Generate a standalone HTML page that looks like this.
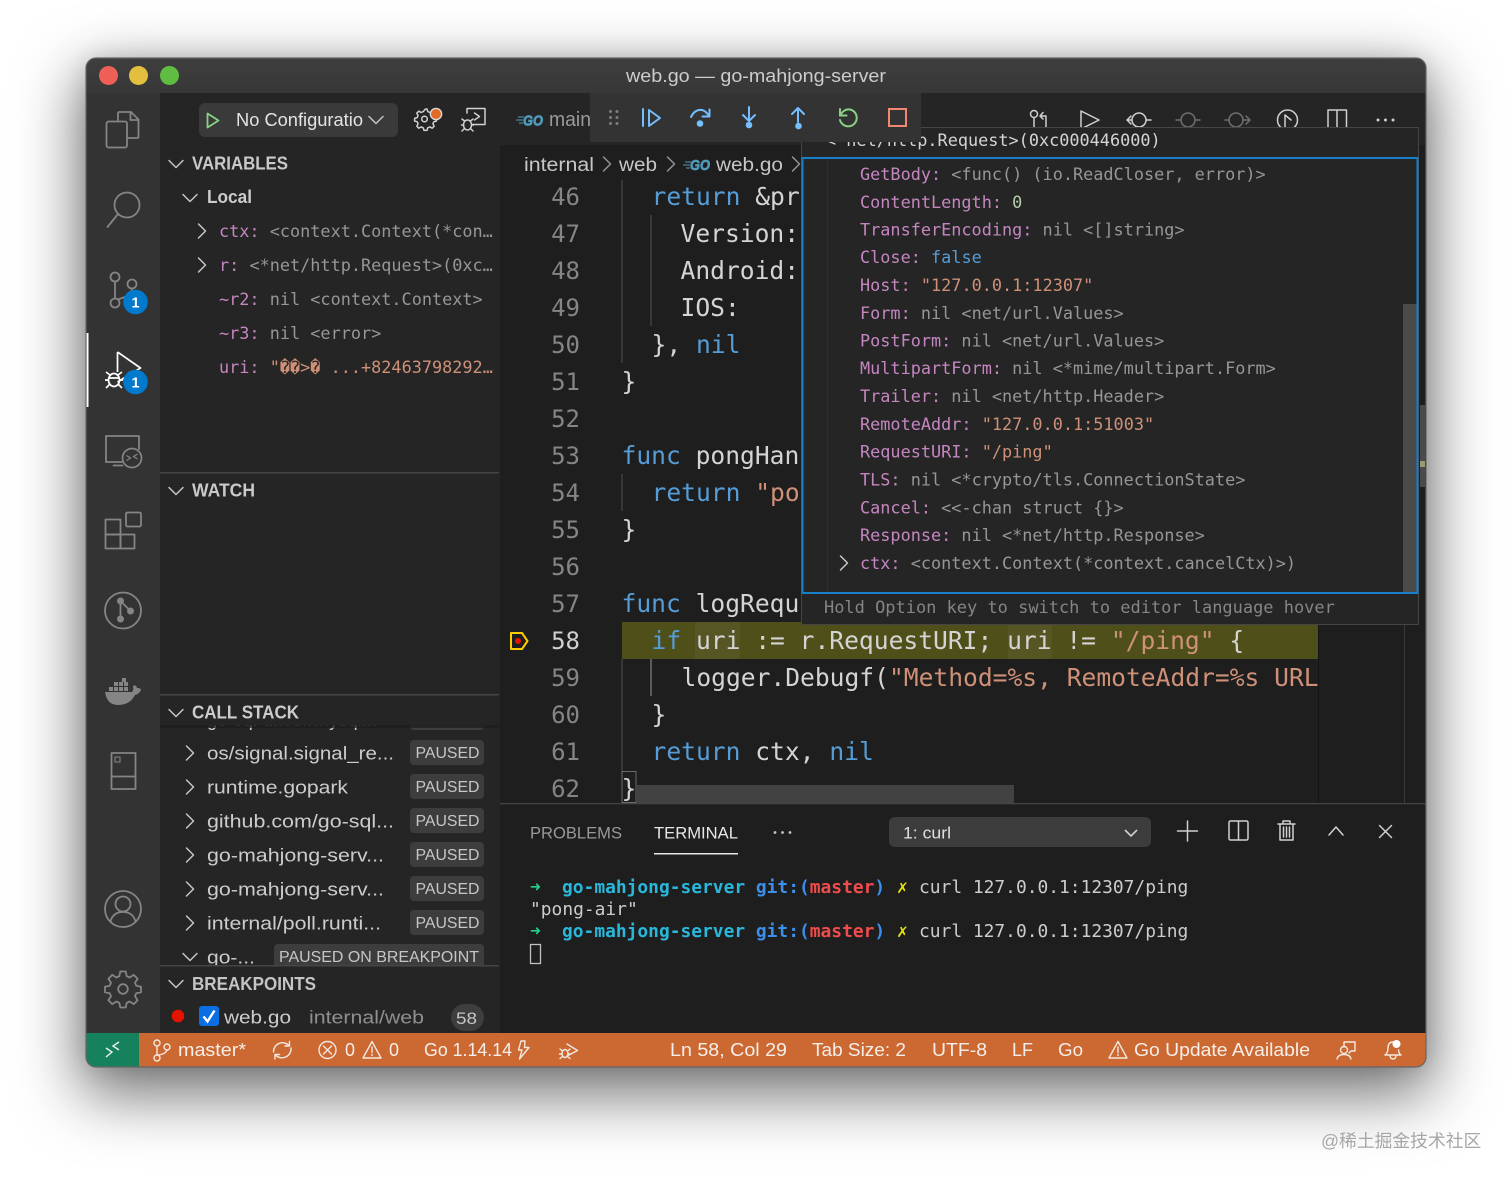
<!DOCTYPE html>
<html><head><meta charset="utf-8"><title>web.go — go-mahjong-server</title>
<style>
html,body{margin:0;padding:0;background:#fff;width:1512px;height:1181px;overflow:hidden}
#shadow{position:absolute;left:86px;top:58px;width:1340px;height:1009px;border-radius:10px;box-shadow:0 22px 62px 6px rgba(0,0,0,.55),0 0 24px rgba(0,0,0,.12)}
svg{position:absolute;left:0;top:0;filter:blur(.3px)}
text{white-space:pre}
.s{font-family:"Liberation Sans",sans-serif;font-size:18px}
.m{font-family:"DejaVu Sans Mono",monospace;font-size:24.62px;fill:#d4d4d4}
.h{font-family:"DejaVu Sans Mono",monospace;font-size:16.85px;fill:#969696}
.t{font-family:"DejaVu Sans Mono",monospace;font-size:17.9px;fill:#cccccc}
.n{fill:#c586c0}
.k{fill:#569cd6}
.r{fill:#ce9178}
.ln{font-family:"DejaVu Sans Mono",monospace;font-size:24px;fill:#858585;text-anchor:end}
.b{font-weight:bold}
.ic{fill:none;stroke:#858585;stroke-width:1.8;stroke-linecap:round;stroke-linejoin:round}
.w{fill:none;stroke:#d0d0d0;stroke-width:1.5;stroke-linecap:round;stroke-linejoin:round}
.st{fill:none;stroke:#f3e8e0;stroke-width:1.4;stroke-linecap:round;stroke-linejoin:round}
.sb{fill:#f6efe9}
.go{fill:#519aba;stroke:#519aba;stroke-width:.7;font-style:italic;font-weight:bold}
</style></head>
<body>
<div id="shadow"></div>
<svg width="1512" height="1181" viewBox="0 0 1512 1181" xmlns="http://www.w3.org/2000/svg">
<defs>
<clipPath id="win"><rect x="86" y="58" width="1340" height="1009" rx="10"/></clipPath>
<clipPath id="stack"><rect x="160" y="725" width="340" height="240"/></clipPath>
<clipPath id="code"><rect x="500" y="180" width="818" height="623"/></clipPath>
<clipPath id="tabs"><rect x="500" y="93" width="926" height="34"/></clipPath>
<clipPath id="top"><rect x="802" y="128" width="616" height="29"/></clipPath>
<linearGradient id="tb" x1="0" x2="0" y1="0" y2="1"><stop offset="0" stop-color="#3e3e3e"/><stop offset="1" stop-color="#373737"/></linearGradient>
<path id="cd" d="M-7-3.5 0 3.5 7-3.5" fill="none" stroke="#c5c5c5" stroke-width="1.5" stroke-linecap="round" stroke-linejoin="round"/>
<path id="cr" d="M-3.5-7 3.5 0-3.5 7" fill="none" stroke="#c5c5c5" stroke-width="1.5" stroke-linecap="round" stroke-linejoin="round"/>
</defs>
<g clip-path="url(#win)">
<rect x="86" y="58" width="1340" height="1009" fill="#1e1e1e"/>
<rect x="86" y="58" width="1340" height="35" fill="url(#tb)"/>
<rect x="86" y="93" width="74" height="940" fill="#333333"/>
<rect x="160" y="93" width="340" height="940" fill="#252526"/>
<rect x="500" y="93" width="926" height="52" fill="#252526"/>
<rect x="500" y="145" width="926" height="35" fill="#1e1e1e"/>
<!-- traffic -->
<circle cx="108.500" cy="75.500" r="9.500" fill="#ee5f58"/>
<circle cx="138.500" cy="75.500" r="9.500" fill="#e3bf3f"/>
<circle cx="169.500" cy="75.500" r="9.500" fill="#5fbd41"/>
<text class="s" x="626" y="82" fill="#cccccc" textLength="260" lengthAdjust="spacingAndGlyphs">web.go — go-mahjong-server</text>

<!-- activity bar -->
<rect x="86" y="333" width="2.500" height="74" fill="#fff"/>
<g class="ic">
<path d="M118 120V113.500Q118 112 119.500 112H131L138.500 119.500V137Q138.500 138 137 138H127"/><path d="M130.500 112V120H138.500"/>
<rect x="106.500" y="121.500" width="20.500" height="26" rx="2"/>
<circle cx="127" cy="205" r="12.500"/><path d="M118 214 107.500 227"/>
<circle cx="115" cy="277" r="4.500"/><circle cx="115" cy="303" r="4.500"/><circle cx="132" cy="284" r="4.500"/>
<path d="M115 281.500V298.500M132 288.500Q131 296 119 299"/>
<path d="M122 462H106V436H139V449"/><path d="M113.500 465.500H122.500"/>
<rect x="105.500" y="519.500" width="15" height="15"/><rect x="105.500" y="534.500" width="15" height="14"/><rect x="120.500" y="534.500" width="14" height="14"/><rect x="126" y="512.500" width="15" height="14" rx="1.500"/>
<circle cx="123" cy="610.500" r="18"/>
<circle cx="123" cy="909" r="18"/><circle cx="123" cy="904" r="7.500"/><path d="M110.500 921.500Q113 912 123 912Q133 912 135.500 921.500"/>
<rect x="111.500" y="753" width="24" height="36"/><path d="M111.500 776.500H135.500"/><rect x="115" y="757" width="5" height="5" stroke-width="1.100"/>
<path d="M120.300 971.500h5.400l1 4.700 3 1.300 4-2.600 3.900 3.900-2.600 4 1.300 3 4.700 1v5.400l-4.700 1-1.300 3 2.600 4-3.900 3.900-4-2.600-3 1.300-1 4.700h-5.400l-1-4.700-3-1.300-4 2.600-3.900-3.900 2.600-4-1.300-3-4.700-1v-5.400l4.700-1 1.300-3-2.600-4 3.900-3.900 4 2.600 3-1.300z"/><circle cx="123" cy="989" r="4.800"/>
</g>
<circle cx="132" cy="458" r="9.500" fill="#333" stroke="#858585" stroke-width="1.700"/>
<path d="M126.500 455.500 130.500 458 126.500 460.500M137.500 454 133.500 456.500 137.500 459" fill="none" stroke="#858585" stroke-width="1.200"/>
<g fill="#858585"><circle cx="120.500" cy="601" r="3.500"/><circle cx="120.500" cy="619" r="3.500"/><circle cx="130.500" cy="611" r="3.500"/></g>
<path d="M120.500 601V619M120.500 601 130.500 611" stroke="#858585" stroke-width="1.800" fill="none"/>
<g fill="#858585">
<path d="M105 692H132Q134 690 133 686Q136 684 137 688Q141 688 141 690Q139 694 135 695Q130 705 118 705Q107 705 105 692Z"/>
<rect x="109" y="687" width="4" height="4"/><rect x="114" y="687" width="4" height="4"/><rect x="119" y="687" width="4" height="4"/><rect x="124" y="687" width="4" height="4"/><rect x="114" y="682" width="4" height="4"/><rect x="119" y="682" width="4" height="4"/><rect x="124" y="682" width="4" height="4"/><rect x="122" y="678" width="4" height="4"/>
</g>
<!-- debug activity -->
<path d="M117.500 352 140.500 368 117.500 382" fill="none" stroke="#fff" stroke-width="1.700" stroke-linejoin="round"/><path d="M117.500 352V372" stroke="#fff" stroke-width="1.700"/>
<g fill="none" stroke="#fff" stroke-width="1.700"><ellipse cx="114" cy="380" rx="5.500" ry="6.500"/><path d="M106 372 110 375M122 372 118 375M105 380H109M119 380H123M106 388 110 384M122 388 118 384M109 378H119"/></g>
<circle cx="135.500" cy="302" r="12.300" fill="#007acc"/><text class="s b" x="135.500" y="307.500" fill="#fff" text-anchor="middle" style="font-size:14.500px">1</text>
<circle cx="135.500" cy="382" r="12.300" fill="#007acc"/><text class="s b" x="135.500" y="387.500" fill="#fff" text-anchor="middle" style="font-size:14.500px">1</text>

<!-- sidebar head -->
<rect x="199" y="103" width="199" height="34" rx="6" fill="#3a3a3a"/>
<path d="M207.500 113.500 218.500 120.500 207.500 127.500Z" fill="none" stroke="#89d185" stroke-width="1.800" stroke-linejoin="round"/>
<text class="s" x="236" y="126" fill="#e4e4e4" textLength="127" lengthAdjust="spacingAndGlyphs">No Configuratio</text>
<use href="#cd" transform="translate(376 120)"/>
<g class="w" stroke-width="1.300">
<path d="M425.500 109l1.500 0 .8 2.600 2 .9 2.400-1.300 2 2-1.300 2.400.9 2 2.600.8v2.600l-2.600.8-.9 2 1.300 2.400-2 2-2.400-1.300-2 .9-.8 2.600h-3l-.8-2.600-2-.9-2.400 1.300-2-2 1.300-2.400-.9-2-2.600-.8v-2.600l2.600-.8.9-2-1.300-2.400 2-2 2.400 1.300 2-.9z"/><circle cx="424.500" cy="119" r="2.800"/>
</g>
<circle cx="436" cy="114" r="6.300" fill="#ddd"/><circle cx="436" cy="114" r="5" fill="#df6a2a"/>
<g class="w">
<path d="M467 113V108.500H485V124.500H472"/><path d="M474.500 113 479.500 116.500 474.500 120"/>
<ellipse cx="467.500" cy="125" rx="4" ry="5"/><path d="M462 119 464.500 121M473 119 470.500 121M461.500 125H463.500M471.500 125H473.500M462 131 464.500 128.500M473 131 470.500 128.500"/>
</g>

<use href="#cd" transform="translate(176 164)"/>
<text class="s b" x="192" y="169.500" fill="#c9c9c9" textLength="96" lengthAdjust="spacingAndGlyphs">VARIABLES</text>
<use href="#cd" transform="translate(190 198)"/>
<text class="s b" x="207" y="203" fill="#cccccc" textLength="45" lengthAdjust="spacingAndGlyphs">Local</text>
<use href="#cr" transform="translate(202 231)"/>
<use href="#cr" transform="translate(202 265)"/>
<text class="h" x="219" y="237"><tspan class="n">ctx:</tspan> &lt;context.Context(*con…</text>
<text class="h" x="219" y="271"><tspan class="n">r:</tspan> &lt;*net/http.Request&gt;(0xc…</text>
<text class="h" x="219" y="305"><tspan class="n">~r2:</tspan> nil &lt;context.Context&gt;</text>
<text class="h" x="219" y="339"><tspan class="n">~r3:</tspan> nil &lt;error&gt;</text>
<text class="h" x="219" y="373"><tspan class="n">uri:</tspan> <tspan class="r">"��&gt;� ...+82463798292…</tspan></text>

<rect x="160" y="472" width="339" height="1.500" fill="#454545"/>
<use href="#cd" transform="translate(176 491)"/>
<text class="s b" x="192" y="496.500" fill="#c9c9c9" textLength="63" lengthAdjust="spacingAndGlyphs">WATCH</text>

<g clip-path="url(#stack)">
<text class="s" x="207" y="726" fill="#ccc" textLength="170" lengthAdjust="spacingAndGlyphs">go-sql-driver/mysql...</text>
<rect x="410" y="706" width="74" height="24" rx="4" fill="#3d3d3d"/>
<use href="#cr" transform="translate(190 753)"/>
<use href="#cr" transform="translate(190 787)"/>
<use href="#cr" transform="translate(190 821)"/>
<use href="#cr" transform="translate(190 855)"/>
<use href="#cr" transform="translate(190 889)"/>
<use href="#cr" transform="translate(190 923)"/>
<use href="#cd" transform="translate(190 957)"/>
<text class="s" x="207" y="759.500" fill="#cccccc" textLength="187" lengthAdjust="spacingAndGlyphs">os/signal.signal_re...</text>
<text class="s" x="207" y="793.500" fill="#cccccc" textLength="141" lengthAdjust="spacingAndGlyphs">runtime.gopark</text>
<text class="s" x="207" y="827.500" fill="#cccccc" textLength="187" lengthAdjust="spacingAndGlyphs">github.com/go-sql...</text>
<text class="s" x="207" y="861.500" fill="#cccccc" textLength="177" lengthAdjust="spacingAndGlyphs">go-mahjong-serv...</text>
<text class="s" x="207" y="895.500" fill="#cccccc" textLength="177" lengthAdjust="spacingAndGlyphs">go-mahjong-serv...</text>
<text class="s" x="207" y="929.500" fill="#cccccc" textLength="174" lengthAdjust="spacingAndGlyphs">internal/poll.runti...</text>
<text class="s" x="207" y="963.500" fill="#cccccc" textLength="48" lengthAdjust="spacingAndGlyphs">go-...</text>
<g fill="#3d3d3d">
<rect x="410" y="740" width="74" height="25" rx="4"/><rect x="410" y="774" width="74" height="25" rx="4"/><rect x="410" y="808" width="74" height="25" rx="4"/><rect x="410" y="842" width="74" height="25" rx="4"/><rect x="410" y="876" width="74" height="25" rx="4"/><rect x="410" y="910" width="74" height="25" rx="4"/><rect x="274" y="944" width="210" height="30" rx="4"/>
</g>
<text class="s" x="415.500" y="758" fill="#c6c6c6" textLength="64" lengthAdjust="spacingAndGlyphs" style="font-size:16px">PAUSED</text>
<text class="s" x="415.500" y="792" fill="#c6c6c6" textLength="64" lengthAdjust="spacingAndGlyphs" style="font-size:16px">PAUSED</text>
<text class="s" x="415.500" y="826" fill="#c6c6c6" textLength="64" lengthAdjust="spacingAndGlyphs" style="font-size:16px">PAUSED</text>
<text class="s" x="415.500" y="860" fill="#c6c6c6" textLength="64" lengthAdjust="spacingAndGlyphs" style="font-size:16px">PAUSED</text>
<text class="s" x="415.500" y="894" fill="#c6c6c6" textLength="64" lengthAdjust="spacingAndGlyphs" style="font-size:16px">PAUSED</text>
<text class="s" x="415.500" y="928" fill="#c6c6c6" textLength="64" lengthAdjust="spacingAndGlyphs" style="font-size:16px">PAUSED</text>
<text class="s" x="279" y="962" fill="#c6c6c6" textLength="200" lengthAdjust="spacingAndGlyphs" style="font-size:16px">PAUSED ON BREAKPOINT</text>
</g>
<rect x="160" y="694" width="339" height="1.500" fill="#454545"/>
<rect x="160" y="695.500" width="340" height="30" fill="#252526"/>
<rect x="160" y="725" width="340" height="3" fill="#1c1c1c" opacity=".7"/>
<use href="#cd" transform="translate(176 713)"/>
<text class="s b" x="192" y="718.500" fill="#cccccc" textLength="107" lengthAdjust="spacingAndGlyphs">CALL STACK</text>

<rect x="160" y="965" width="339" height="1.500" fill="#454545"/>
<use href="#cd" transform="translate(176 984)"/>
<text class="s b" x="192" y="990" fill="#c4c4c4" textLength="124" lengthAdjust="spacingAndGlyphs">BREAKPOINTS</text>
<circle cx="178" cy="1016" r="6.300" fill="#e51400"/>
<rect x="199" y="1006" width="20" height="20" rx="3" fill="#0b6fe3"/>
<path d="M203.500 1016.500 207.500 1021.500 214.500 1010.500" fill="none" stroke="#fff" stroke-width="2.400"/>
<text class="s" x="224" y="1023.500" fill="#cccccc" textLength="67" lengthAdjust="spacingAndGlyphs">web.go</text>
<text class="s" x="309" y="1023.500" fill="#8f8f8f" textLength="115" lengthAdjust="spacingAndGlyphs">internal/web</text>
<rect x="451" y="1004" width="33" height="27" rx="13.500" fill="#3e3e3e"/>
<text class="s" x="456" y="1024" fill="#c6c6c6" textLength="21" lengthAdjust="spacingAndGlyphs" style="font-size:17px">58</text>

<!-- tabs -->
<path d="M516 120H523M518 117H524M519 123H523" stroke="#519aba" stroke-width="1"/>
<text class="s go" x="523" y="125.500" textLength="20" lengthAdjust="spacingAndGlyphs" style="font-size:15px">GO</text>
<text class="s" x="549" y="126" fill="#9a9a9a" textLength="42" lengthAdjust="spacingAndGlyphs" style="font-size:20px">main</text>

<!-- breadcrumb -->
<text class="s" x="524" y="171" fill="#c6c6c6" textLength="70" lengthAdjust="spacingAndGlyphs" style="font-size:19px">internal</text>
<use href="#cr" transform="translate(607 164)" style="opacity:.7"/>
<text class="s" x="619" y="171" fill="#c6c6c6" textLength="38" lengthAdjust="spacingAndGlyphs" style="font-size:19px">web</text>
<use href="#cr" transform="translate(671 164)" style="opacity:.7"/>
<path d="M683 165H690M685 162H691M686 168H690" stroke="#519aba" stroke-width="1"/>
<text class="s go" x="690" y="170" textLength="20" lengthAdjust="spacingAndGlyphs" style="font-size:15px">GO</text>
<text class="s" x="716" y="171" fill="#c6c6c6" textLength="67" lengthAdjust="spacingAndGlyphs" style="font-size:19px">web.go</text>
<use href="#cr" transform="translate(796 164)" style="opacity:.7"/>

<!-- top right icons -->
<g clip-path="url(#tabs)">
<g class="w">
<circle cx="1034" cy="114" r="3.500"/><path d="M1034 117.500V127M1040 116H1046V127M1043 112.500 1040 116 1043 119"/>
<path d="M1081 111 1099 120 1081 129Z"/>
<circle cx="1139" cy="120" r="7"/><path d="M1132 120H1127M1146 120H1151M1127 120 1131 116M1127 120 1131 124"/>
<circle cx="1287.500" cy="120" r="10"/><path d="M1285 115V128M1285 115 1291 120"/>
<path d="M1328 127V110H1346.500V127M1337 110V127"/>
</g>
<g fill="none" stroke="#6f6f6f" stroke-width="1.500" stroke-linecap="round">
<circle cx="1188" cy="120" r="7"/><path d="M1176 120H1181M1195 120H1200"/>
<circle cx="1236" cy="120" r="7"/><path d="M1225 120H1229M1243 120H1250M1246 116 1250 120 1246 124"/>
</g>
<g fill="#cfcfcf"><circle cx="1378" cy="120" r="1.500"/><circle cx="1385.500" cy="120" r="1.500"/><circle cx="1393" cy="120" r="1.500"/></g>
</g>

<!-- editor -->
<g stroke="#404040" stroke-width="1.500">
<path d="M622 180V363M651 215V326M622 474V511M622 659V771"/>
</g>
<path d="M651 659V696" stroke="#707070" stroke-width="1.500"/>
<rect x="622" y="622" width="696" height="37" fill="#4f4f1a"/>
<rect x="695" y="622" width="45" height="37" fill="#565624"/>
<rect x="1008" y="622" width="44" height="37" fill="#565624"/>
<rect x="1318" y="180" width="1" height="623" fill="#151515"/>
<rect x="1404" y="600" width="1" height="203" fill="#3a3a3a"/>
<g>
<text class="ln" x="580" y="205">46</text><text class="ln" x="580" y="242">47</text><text class="ln" x="580" y="279">48</text><text class="ln" x="580" y="316">49</text><text class="ln" x="580" y="353">50</text><text class="ln" x="580" y="390">51</text><text class="ln" x="580" y="427">52</text><text class="ln" x="580" y="464">53</text><text class="ln" x="580" y="501">54</text><text class="ln" x="580" y="538">55</text><text class="ln" x="580" y="575">56</text><text class="ln" x="580" y="612">57</text><text class="ln" x="580" y="649" style="fill:#d0d0d0">58</text><text class="ln" x="580" y="686">59</text><text class="ln" x="580" y="723">60</text><text class="ln" x="580" y="760">61</text><text class="ln" x="580" y="797">62</text>
</g>
<path d="M511 633H522L527.500 641 522 649H511Z" fill="none" stroke="#ffcc00" stroke-width="2" stroke-linejoin="round"/>
<circle cx="518" cy="641" r="3" fill="#e51400"/>
<g clip-path="url(#code)">
<text class="m" x="651.500" y="205"><tspan class="k">return</tspan> &amp;pr</text>
<text class="m" x="680.500" y="242">Version:</text>
<text class="m" x="680.500" y="279">Android:</text>
<text class="m" x="680.500" y="316">IOS:</text>
<text class="m" x="651.500" y="353">}, <tspan class="k">nil</tspan></text>
<text class="m" x="621.500" y="390">}</text>
<text class="m" x="621.500" y="464"><tspan class="k">func</tspan> pongHan</text>
<text class="m" x="651.500" y="501"><tspan class="k">return</tspan> <tspan class="r">"po</tspan></text>
<text class="m" x="621.500" y="538">}</text>
<text class="m" x="621.500" y="612"><tspan class="k">func</tspan> logRequ</text>
<text class="m" x="651.500" y="649"><tspan class="k">if</tspan> uri := r.RequestURI; uri != <tspan class="r">"/ping"</tspan> {</text>
<text class="m" x="681.500" y="686">logger.Debugf(<tspan class="r">"Method=%s, RemoteAddr=%s URL</tspan></text>
<text class="m" x="651.500" y="723">}</text>
<text class="m" x="651.500" y="760"><tspan class="k">return</tspan> ctx, <tspan class="k">nil</tspan></text>
<text class="m" x="621.500" y="797">}</text>
</g>
<rect x="622" y="771.500" width="14" height="31" fill="none" stroke="#6a6a6a" stroke-width="1"/>
<rect x="636" y="785" width="378" height="18" fill="#424242"/>
<rect x="1420" y="405" width="5" height="82" fill="#4a4a4a"/>
<rect x="1420" y="461" width="5" height="6" fill="#9a9a70"/>

<!-- hover -->
<rect x="801.500" y="127.500" width="617" height="497" fill="#252526" stroke="#454545" stroke-width="1"/>
<g clip-path="url(#top)"><text class="h" x="826" y="146" style="fill:#d4d4d4">&lt;*net/http.Request&gt;(0xc000446000)</text></g>
<rect x="802.500" y="158" width="615" height="435" fill="#252526" stroke="#1a7fc9" stroke-width="2"/>
<rect x="1403" y="304" width="13.500" height="288" fill="#4a4a4a"/>
<rect x="827" y="159" width="1" height="433" fill="#2f2f2f"/>
<text class="h" x="860" y="180"><tspan class="n">GetBody:</tspan> &lt;func() (io.ReadCloser, error)&gt;</text>
<text class="h" x="860" y="208"><tspan class="n">ContentLength:</tspan> <tspan fill="#b5cea8">0</tspan></text>
<text class="h" x="860" y="235.500"><tspan class="n">TransferEncoding:</tspan> nil &lt;[]string&gt;</text>
<text class="h" x="860" y="263"><tspan class="n">Close:</tspan> <tspan class="k">false</tspan></text>
<text class="h" x="860" y="291"><tspan class="n">Host:</tspan> <tspan class="r">"127.0.0.1:12307"</tspan></text>
<text class="h" x="860" y="319"><tspan class="n">Form:</tspan> nil &lt;net/url.Values&gt;</text>
<text class="h" x="860" y="346.500"><tspan class="n">PostForm:</tspan> nil &lt;net/url.Values&gt;</text>
<text class="h" x="860" y="374"><tspan class="n">MultipartForm:</tspan> nil &lt;*mime/multipart.Form&gt;</text>
<text class="h" x="860" y="402"><tspan class="n">Trailer:</tspan> nil &lt;net/http.Header&gt;</text>
<text class="h" x="860" y="430"><tspan class="n">RemoteAddr:</tspan> <tspan class="r">"127.0.0.1:51003"</tspan></text>
<text class="h" x="860" y="457.500"><tspan class="n">RequestURI:</tspan> <tspan class="r">"/ping"</tspan></text>
<text class="h" x="860" y="485.500"><tspan class="n">TLS:</tspan> nil &lt;*crypto/tls.ConnectionState&gt;</text>
<text class="h" x="860" y="513.500"><tspan class="n">Cancel:</tspan> &lt;&lt;-chan struct {}&gt;</text>
<text class="h" x="860" y="541"><tspan class="n">Response:</tspan> nil &lt;*net/http.Response&gt;</text>
<text class="h" x="860" y="569"><tspan class="n">ctx:</tspan> &lt;context.Context(*context.cancelCtx)&gt;)</text>
<use href="#cr" transform="translate(844 563)"/>
<text class="h" x="824" y="613" style="fill:#858585;font-size:16.98px">Hold Option key to switch to editor language hover</text>

<!-- debug toolbar -->
<rect x="590" y="93" width="331" height="49" fill="#333333"/>
<g fill="#7d7d7d"><circle cx="610.500" cy="111.500" r="1.500"/><circle cx="617" cy="111.500" r="1.500"/><circle cx="610.500" cy="117.500" r="1.500"/><circle cx="617" cy="117.500" r="1.500"/><circle cx="610.500" cy="123.500" r="1.500"/><circle cx="617" cy="123.500" r="1.500"/></g>
<g fill="none" stroke="#75beff" stroke-width="2" stroke-linejoin="round" stroke-linecap="round">
<path d="M643 109V126"/><path d="M649 110V126L660 118Z"/>
<path d="M691 117Q695 109 702 110Q706 111 709 116M709.500 109.500V116.500H702.500"/>
<path d="M749 107V120M743 115 749 121 755 115"/>
<path d="M798 122V108M792 114 798 108 804 114"/>
</g>
<g fill="#75beff"><circle cx="700" cy="123.500" r="3.300"/><circle cx="749" cy="125" r="3.300"/><circle cx="798.500" cy="126" r="3.300"/></g>
<path d="M840 109V115.500H846.500M840 115.500Q844 108.500 850 109.500A8.500 8.500 0 1 1 840 120" fill="none" stroke="#89d185" stroke-width="2" stroke-linecap="round"/>
<rect x="889" y="109" width="17" height="17" fill="none" stroke="#f48771" stroke-width="2"/>

<!-- panel -->
<rect x="500" y="803" width="926" height="230" fill="#1e1e1e"/>
<rect x="500" y="803" width="926" height="1.300" fill="#444"/>
<text class="s" x="530" y="838.500" fill="#999999" textLength="92" lengthAdjust="spacingAndGlyphs" style="font-size:17px">PROBLEMS</text>
<text class="s" x="654" y="838.500" fill="#e7e7e7" textLength="84" lengthAdjust="spacingAndGlyphs" style="font-size:17px">TERMINAL</text>
<rect x="654" y="853" width="84" height="1.500" fill="#e7e7e7"/>
<g fill="#c5c5c5"><circle cx="775" cy="832.500" r="1.400"/><circle cx="782.500" cy="832.500" r="1.400"/><circle cx="790" cy="832.500" r="1.400"/></g>
<rect x="889" y="817" width="262" height="30" rx="6" fill="#3c3c3c"/>
<text class="s" x="903" y="838.500" fill="#e0e0e0" textLength="48" lengthAdjust="spacingAndGlyphs" style="font-size:17px">1: curl</text>
<path d="M1125 830 1131 836 1137 830" fill="none" stroke="#d0d0d0" stroke-width="1.600"/>
<g class="w">
<path d="M1187.500 821V841M1177.500 831H1197.500"/>
<rect x="1229" y="821" width="19" height="19" rx="1.500"/><path d="M1238.500 821V840"/>
<path d="M1278 824H1295M1283 824V821H1290V824M1280 824V840H1293V824M1283.500 827V837M1286.500 827V837M1289.500 827V837"/>
<path d="M1329 835 1336 827 1343 835"/>
<path d="M1379.500 825.500 1391.500 837.500M1391.500 825.500 1379.500 837.500"/>
</g>

<!-- terminal -->
<text class="t" x="530" y="893" style="fill:#23d18b;font-weight:bold">➜</text>
<text class="t b" x="562" y="893"><tspan fill="#29b8db">go-mahjong-server</tspan> <tspan fill="#3b8eea">git:(</tspan><tspan fill="#f14c4c">master</tspan><tspan fill="#3b8eea">)</tspan></text>
<text class="t b" x="897" y="893" style="fill:#e5e510">✗</text>
<text class="t" x="919" y="893">curl 127.0.0.1:12307/ping</text>
<text class="t" x="530" y="915">"pong-air"</text>
<text class="t" x="530" y="937" style="fill:#23d18b;font-weight:bold">➜</text>
<text class="t b" x="562" y="937"><tspan fill="#29b8db">go-mahjong-server</tspan> <tspan fill="#3b8eea">git:(</tspan><tspan fill="#f14c4c">master</tspan><tspan fill="#3b8eea">)</tspan></text>
<text class="t b" x="897" y="937" style="fill:#e5e510">✗</text>
<text class="t" x="919" y="937">curl 127.0.0.1:12307/ping</text>
<rect x="530.500" y="944.500" width="10" height="19" fill="none" stroke="#c0c0c0" stroke-width="1.300"/>

<!-- status bar -->
<rect x="86" y="1033" width="1340" height="34" fill="#cc6933"/>
<rect x="86" y="1033" width="53" height="34" fill="#16825d"/>
<path d="M106 1048 112 1052 106 1057M119 1042 113 1046 119 1050" fill="none" stroke="#e8f3ee" stroke-width="1.400"/>
<g class="st">
<circle cx="157" cy="1043" r="3"/><circle cx="157" cy="1058" r="3"/><circle cx="167" cy="1047" r="3"/><path d="M157 1046V1055M167 1050Q166 1054 158 1055"/>
<path d="M273.500 1052A9 9 0 0 1 289 1045.500M291 1048A9 9 0 0 1 275.500 1055M289.500 1041.500V1046H285M275 1059V1054.500H279.500"/>
<circle cx="327.500" cy="1050" r="8.500"/><path d="M323.500 1046 331.500 1054M331.500 1046 323.500 1054"/>
<path d="M372 1041.500 381 1058H363Z"/><path d="M372 1047V1052.500M372 1054.500V1055.500"/>
<path d="M525 1041H521L518.500 1050H522L519.500 1059L529 1047.500H524.500Z"/>
<path d="M567 1044 577.500 1050.500 567 1056"/><ellipse cx="565" cy="1053.500" rx="3" ry="4"/><path d="M560 1049 562.500 1051M570 1049 567.500 1051M559.500 1054H562M568 1054H571M560 1058.500 562.500 1056.500M570 1058.500 567.500 1056.500"/>
<path d="M1118 1041.500 1127 1058H1109Z"/><path d="M1118 1047V1052.500M1118 1054.500V1055.500"/>
<path d="M1344 1047V1042H1355V1051H1351L1349 1053"/><circle cx="1344" cy="1050" r="3.500"/><path d="M1337 1059Q1338 1054.500 1344 1054.500Q1350 1054.500 1351 1059"/>
<path d="M1385 1055Q1388 1053 1388 1048Q1388 1042 1393 1042M1385 1055H1401Q1399 1054 1398.500 1050M1390 1055Q1390 1059 1393 1059Q1396 1059 1396 1055"/>
</g>
<circle cx="1396.500" cy="1044" r="4" fill="#fff"/>
<g class="sb">
<text class="s sb" x="178" y="1056" textLength="68" lengthAdjust="spacingAndGlyphs">master*</text>
<text class="s sb" x="345" y="1056" textLength="10" lengthAdjust="spacingAndGlyphs">0</text>
<text class="s sb" x="389" y="1056" textLength="10" lengthAdjust="spacingAndGlyphs">0</text>
<text class="s sb" x="424" y="1056" textLength="88" lengthAdjust="spacingAndGlyphs">Go 1.14.14</text>
<text class="s sb" x="670" y="1056" textLength="117" lengthAdjust="spacingAndGlyphs">Ln 58, Col 29</text>
<text class="s sb" x="812" y="1056" textLength="94" lengthAdjust="spacingAndGlyphs">Tab Size: 2</text>
<text class="s sb" x="932" y="1056" textLength="55" lengthAdjust="spacingAndGlyphs">UTF-8</text>
<text class="s sb" x="1012" y="1056" textLength="21" lengthAdjust="spacingAndGlyphs">LF</text>
<text class="s sb" x="1058" y="1056" textLength="25" lengthAdjust="spacingAndGlyphs">Go</text>
<text class="s sb" x="1134" y="1056" textLength="176" lengthAdjust="spacingAndGlyphs">Go Update Available</text>
</g>
</g>
<rect x="86" y="58" width="1340" height="1009" rx="10" fill="none" stroke="#666" stroke-width="1.200"/>
<text x="1321" y="1147" fill="#a6a6a6" style="font-family:'Liberation Sans','Noto Sans CJK SC',sans-serif;font-size:17.800px">@稀土掘金技术社区</text>
</svg>
</body></html>
